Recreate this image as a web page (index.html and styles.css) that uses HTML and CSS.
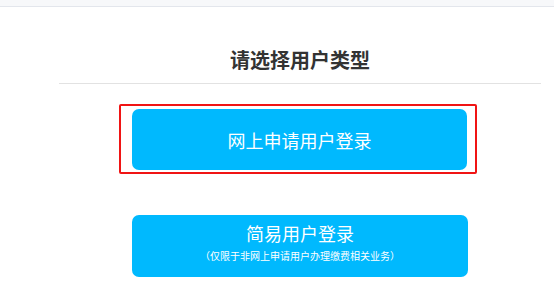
FILE: index.html
```html
<!DOCTYPE html>
<html lang="zh-CN">
<head>
    <meta charset="UTF-8">
    <meta name="viewport" content="width=device-width, initial-scale=1.0">
    <title>请选择用户类型</title>
    <link rel="stylesheet" href="styles.css">
</head>
<body>

<div class="top-bar"></div>

<div class="panel">
    <h2 class="panel-title">请选择用户类型</h2>

    <div class="mark-box">
        <button type="button" class="login-btn btn-online">网上申请用户登录</button>
    </div>

    <button type="button" class="login-btn btn-simple">
        <span class="btn-main">简易用户登录</span>
        <span class="btn-note">（仅限于非网上申请用户办理缴费相关业务）</span>
    </button>
</div>

</body>
</html>
```

FILE: styles.css
```css
body {
    margin: 0;
    background: #fff;
    font-family: "Noto Sans CJK SC", "Noto Sans", sans-serif;
}
.top-bar {
    height: 6px;
    background: #f7f8fa;
    border-bottom: 1px solid #e3e6ec;
}
.panel {
    width: 482px;
    margin-left: 59px;
}
.panel-title {
    margin: 39px 0 0;
    padding-bottom: 9px;
    border-bottom: 1px solid #e2e2e2;
    text-align: center;
    font-size: 20px;
    line-height: 28px;
    font-weight: bold;
    color: #333;
}
.mark-box {
    width: fit-content;
    margin: 20px 0 0 60px;
    padding: 3px 8px 2px 11px;
    border: 2px solid #f01414;
    border-radius: 2px;
}
.login-btn {
    display: flex;
    flex-direction: column;
    align-items: center;
    justify-content: center;
    border: none;
    border-radius: 7px;
    background-color: #00b9fe;
    color: #fff;
    font-family: inherit;
    cursor: pointer;
    padding: 0;
}
.btn-online {
    width: 335px;
    height: 61px;
    font-size: 18px;
}
.btn-simple {
    width: 336px;
    height: 62px;
    margin: 41px 0 0 73px;
    justify-content: flex-start;
    padding-top: 6px;
    box-sizing: border-box;
}
.btn-main {
    font-size: 18px;
    line-height: 24px;
}
.btn-note {
    margin-top: 4px;
    font-size: 10px;
    line-height: 14px;
}
```
